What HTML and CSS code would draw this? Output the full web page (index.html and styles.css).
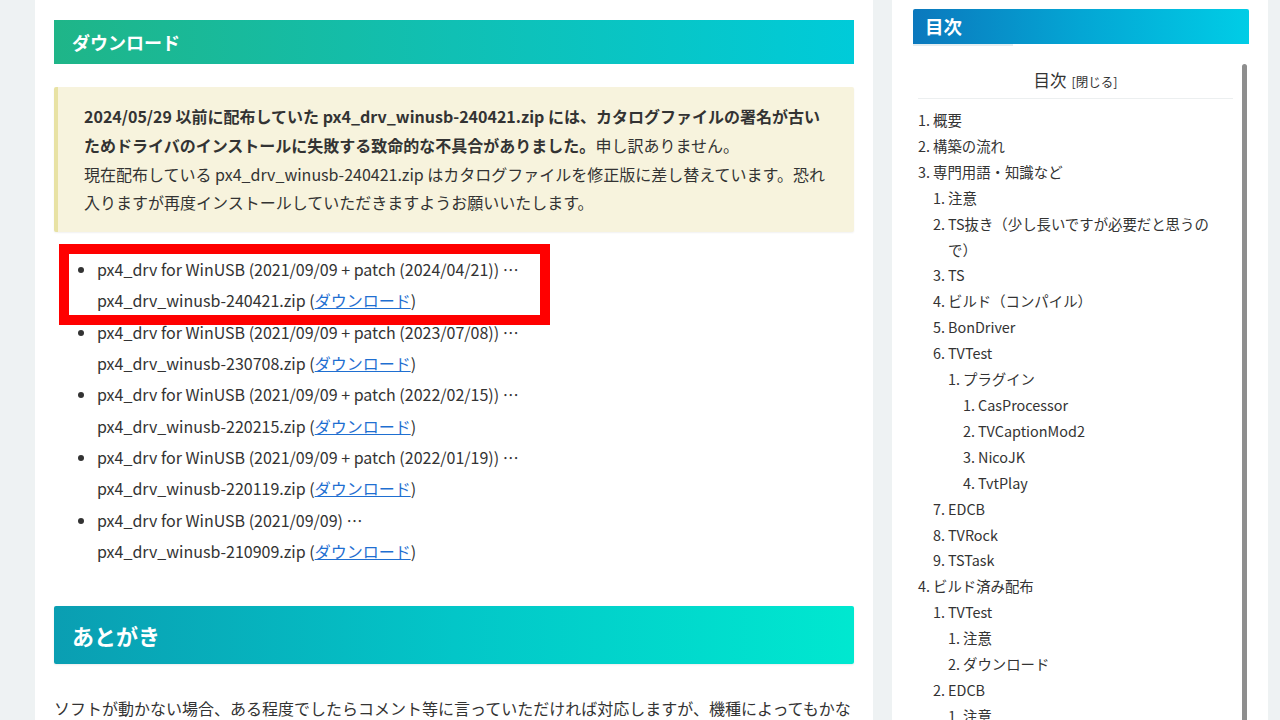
FILE: index.html
```html
<!DOCTYPE html>
<html lang="ja">
<head>
<meta charset="utf-8">
<title>px4_drv ダウンロード</title>
<link rel="stylesheet" href="styles.css">
</head>
<body>
<div class="page">
  <main class="main-card">
    <h2 class="h-download">ダウンロード</h2>
    <div class="note">
      <strong>2024/05/29 以前に配布していた px4_drv_winusb-240421.zip には、カタログファイルの署名が古いためドライバのインストールに失敗する致命的な不具合がありました。</strong>申し訳ありません。<br>
      現在配布している px4_drv_winusb-240421.zip はカタログファイルを修正版に差し替えています。恐れ入りますが再度インストールしていただきますようお願いいたします。
    </div>
    <ul class="dl-list">
      <li>px4_drv for WinUSB (2021/09/09 + patch (2024/04/21)) …<br>px4_drv_winusb-240421.zip (<a href="#">ダウンロード</a>)</li>
      <li>px4_drv for WinUSB (2021/09/09 + patch (2023/07/08)) …<br>px4_drv_winusb-230708.zip (<a href="#">ダウンロード</a>)</li>
      <li>px4_drv for WinUSB (2021/09/09 + patch (2022/02/15)) …<br>px4_drv_winusb-220215.zip (<a href="#">ダウンロード</a>)</li>
      <li>px4_drv for WinUSB (2021/09/09 + patch (2022/01/19)) …<br>px4_drv_winusb-220119.zip (<a href="#">ダウンロード</a>)</li>
      <li>px4_drv for WinUSB (2021/09/09) …<br>px4_drv_winusb-210909.zip (<a href="#">ダウンロード</a>)</li>
      <div class="hl"></div>
    </ul>
    <h2 class="h-after">あとがき</h2>
    <p class="after-text">ソフトが動かない場合、ある程度でしたらコメント等に言っていただければ対応しますが、機種によってもかなり環境が異なるため、対応できない場合もあります。</p>
  </main>
  <aside class="side-card">
    <div class="side-head">目次</div>
    <div class="side-head-line"></div>
    <div class="toc-wrap">
      <div class="toc">
        <div class="toc-title">目次<span class="toc-toggle">[閉じる]</span></div>
        <ol class="toc-list">
          <li class="ti"><span class="tn">1.</span><div class="tb">概要</div></li>
          <li class="ti"><span class="tn">2.</span><div class="tb">構築の流れ</div></li>
          <li class="ti"><span class="tn">3.</span><div class="tb">専門用語・知識など
            <ol class="toc-sub">
              <li class="ti"><span class="tn">1.</span><div class="tb">注意</div></li>
              <li class="ti"><span class="tn">2.</span><div class="tb">TS抜き（少し長いですが必要だと思うので）</div></li>
              <li class="ti"><span class="tn">3.</span><div class="tb">TS</div></li>
              <li class="ti"><span class="tn">4.</span><div class="tb">ビルド（コンパイル）</div></li>
              <li class="ti"><span class="tn">5.</span><div class="tb">BonDriver</div></li>
              <li class="ti"><span class="tn">6.</span><div class="tb">TVTest
                <ol class="toc-sub">
                  <li class="ti"><span class="tn">1.</span><div class="tb">プラグイン
                    <ol class="toc-sub">
                      <li class="ti"><span class="tn">1.</span><div class="tb">CasProcessor</div></li>
                      <li class="ti"><span class="tn">2.</span><div class="tb">TVCaptionMod2</div></li>
                      <li class="ti"><span class="tn">3.</span><div class="tb">NicoJK</div></li>
                      <li class="ti"><span class="tn">4.</span><div class="tb">TvtPlay</div></li>
                    </ol>
                  </div></li>
                </ol>
              </div></li>
              <li class="ti"><span class="tn">7.</span><div class="tb">EDCB</div></li>
              <li class="ti"><span class="tn">8.</span><div class="tb">TVRock</div></li>
              <li class="ti"><span class="tn">9.</span><div class="tb">TSTask</div></li>
            </ol>
          </div></li>
          <li class="ti"><span class="tn">4.</span><div class="tb">ビルド済み配布
            <ol class="toc-sub">
              <li class="ti"><span class="tn">1.</span><div class="tb">TVTest
                <ol class="toc-sub">
                  <li class="ti"><span class="tn">1.</span><div class="tb">注意</div></li>
                  <li class="ti"><span class="tn">2.</span><div class="tb">ダウンロード</div></li>
                </ol>
              </div></li>
              <li class="ti"><span class="tn">2.</span><div class="tb">EDCB
                <ol class="toc-sub">
                  <li class="ti"><span class="tn">1.</span><div class="tb">注意</div></li>
                  <li class="ti"><span class="tn">2.</span><div class="tb">ダウンロード</div></li>
                </ol>
              </div></li>
            </ol>
          </div></li>
        </ol>
      </div>
      <div class="toc-scroll"></div>
    </div>
  </aside>
</div>
</body>
</html>
```

FILE: styles.css
```css
html, body {
  margin: 0;
  padding: 0;
  overflow: hidden;
  height: 720px;
}
body {
  background: #eef2f3;
  color: #333;
  font-family: "Noto Sans CJK JP", "Noto Sans", sans-serif;
  font-size: 16px;
}
.page {
  display: flex;
  align-items: flex-start;
  gap: 19px;
  padding-left: 35px;
}
.main-card {
  width: 838px;
  box-sizing: border-box;
  background: #fff;
  padding: 20px 19px 40px;
}
.h-download {
  margin: 0;
  height: 44px;
  line-height: 44px;
  padding: 0 18px;
  font-size: 18px;
  font-weight: bold;
  color: #fff;
  background: linear-gradient(90deg, #1fb588 0%, #10c0b4 50%, #00cbd9 100%);
}
.note {
  margin-top: 23px;
  background: #f7f3dd;
  border-left: 4px solid #e8e2a4;
  border-radius: 2px;
  padding: 15px 21px 15px 26px;
  line-height: 28.8px;
  box-shadow: 0 1px 2px rgba(0,0,0,0.06);
}
.note strong {
  font-weight: bold;
}
.dl-list {
  position: relative;
  margin: 22px 0 0;
  padding-left: 43px;
  line-height: 31.3px;
}
.dl-list a {
  color: #1f6fd1;
  text-decoration: underline;
}
.hl {
  position: absolute;
  left: 5px;
  top: -10px;
  width: 491px;
  height: 81px;
  box-sizing: border-box;
  border: 10px solid #ff0000;
}
.h-after {
  margin: 38.6px 0 0;
  height: 58px;
  line-height: 58px;
  padding: 0 18px;
  font-size: 22px;
  font-weight: bold;
  color: #fff;
  border-radius: 2px;
  background: linear-gradient(90deg, #0a9eb2 0%, #03c6c8 50%, #00e8d0 100%);
  box-shadow: 0 1px 2px rgba(0,0,0,0.08);
}
.after-text {
  margin: 30px 0 0;
  line-height: 28.8px;
}
.side-card {
  width: 376px;
  box-sizing: border-box;
  background: #fff;
  padding: 9px 19px 40px 21px;
}
.side-head {
  height: 35px;
  line-height: 35px;
  padding-left: 12px;
  font-size: 18.5px;
  font-weight: bold;
  color: #fff;
  border-radius: 2px 2px 0 0;
  background: linear-gradient(90deg, #0b78bd 0%, #04a6d4 50%, #00cde6 100%);
}
.side-head-line {
  width: 100px;
  height: 2px;
  background: #e4edf0;
}
.toc-wrap {
  display: flex;
  margin-top: 18px;
}
.toc {
  flex: 1;
  min-width: 0;
  padding: 0 8px 0 5px;
}
.toc-title {
  text-align: center;
  font-size: 16.5px;
  line-height: 24px;
  padding: 4px 0 4px;
  border-bottom: 1px solid #eceff0;
}
.toc-toggle {
  font-size: 12.5px;
  margin-left: 5px;
}
.toc-list {
  list-style: none;
  margin: 8px 15px 0 0;
  padding: 0;
  font-size: 14.4px;
  line-height: 25.9px;
}
.toc-sub {
  list-style: none;
  margin: 0;
  padding: 0;
}
.ti {
  display: flex;
}
.tn {
  flex: none;
  margin-right: 3px;
}
.tb {
  flex: 1;
  min-width: 0;
}
.toc-scroll {
  flex: none;
  width: 5px;
  margin: 0 2px 0 1px;
  background: #8e8e8e;
  border-radius: 3px 3px 0 0;
}
```
